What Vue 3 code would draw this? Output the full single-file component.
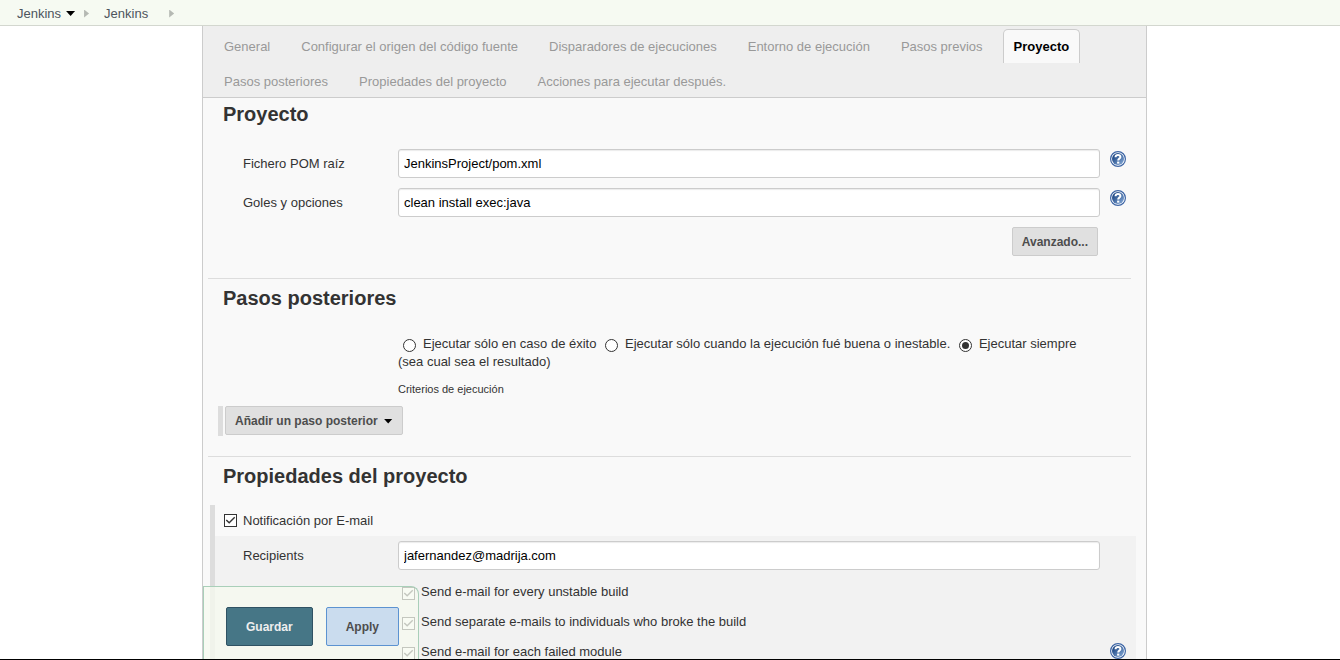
<script setup>
import { ref } from 'vue'

const tabs = [
  'General',
  'Configurar el origen del código fuente',
  'Disparadores de ejecuciones',
  'Entorno de ejecución',
  'Pasos previos',
  'Proyecto',
  'Pasos posteriores',
  'Propiedades del proyecto',
  'Acciones para ejecutar después.',
]
const active = ref('Proyecto')

const fields = ref([
  { id: 'pom', label: 'Fichero POM raíz', value: 'JenkinsProject/pom.xml' },
  { id: 'goals', label: 'Goles y opciones', value: 'clean install exec:java' },
])

const runModes = [
  { id: 'success', label: 'Ejecutar sólo en caso de éxito' },
  { id: 'unstable', label: 'Ejecutar sólo cuando la ejecución fué buena o inestable.' },
  { id: 'always', label: 'Ejecutar siempre (sea cual sea el resultado)' },
]
const runMode = ref('always')

const notify = ref(true)
const recipients = ref('jafernandez@madrija.com')
const mailOptions = ref([
  { id: 'every', label: 'Send e-mail for every unstable build', on: true },
  { id: 'separate', label: 'Send separate e-mails to individuals who broke the build', on: true },
  { id: 'module', label: 'Send e-mail for each failed module', on: true, help: true },
])
</script>

<template>
  <div class="page">
    <svg class="defs" width="0" height="0" aria-hidden="true">
      <defs>
        <linearGradient id="help-fill" x1="0" y1="0" x2="1" y2="1">
          <stop offset="0.2" stop-color="#204a87" />
          <stop offset="1" stop-color="#8db0dc" />
        </linearGradient>
        <symbol id="help-icon" viewBox="0 0 16 16">
          <circle cx="8" cy="8" r="7.4" fill="#fff" stroke="#3d65a5" stroke-width="1.2" />
          <circle cx="8" cy="8" r="6" fill="url(#help-fill)" />
          <path d="M5.5 6.2C5.6 4.6 6.6 4 8 4C9.6 4 10.4 4.8 10.4 5.9C10.4 7.5 8.2 7.7 8.2 9.6" fill="none" stroke="#fff" stroke-width="2" />
          <rect x="7.1" y="10.6" width="2.2" height="2" fill="#fff" />
        </symbol>
      </defs>
    </svg>

    <nav class="crumbs">
      <a href="#">Jenkins</a>
      <span class="caret"></span>
      <span class="arrow"></span>
      <a class="second" href="#">Jenkins</a>
      <span class="arrow last"></span>
    </nav>

    <main class="panel">
      <div class="tabbar">
        <div class="tabs">
          <button
            v-for="tab in tabs"
            :key="tab"
            type="button"
            class="tab"
            :class="{ active: tab === active }"
            @click="active = tab"
          >{{ tab }}</button>
        </div>
      </div>

      <section class="first">
        <h2>Proyecto</h2>
        <div v-for="f in fields" :key="f.id" class="row">
          <label :for="f.id">{{ f.label }}</label>
          <input :id="f.id" v-model="f.value" type="text" class="text" />
          <a class="help" href="#" aria-label="Ayuda"><svg width="16" height="16"><use href="#help-icon" /></svg></a>
        </div>
        <div class="advanced">
          <button type="button" class="btn">Avanzado...</button>
        </div>
      </section>
      <hr />

      <section>
        <h2>Pasos posteriores</h2>
        <div class="modes">
          <template v-for="m in runModes" :key="m.id">
            <input :id="m.id" v-model="runMode" type="radio" name="mode" :value="m.id" />
            <label :for="m.id">{{ m.label }}</label>{{ ' ' }}
          </template>
          <p>Criterios de ejecución</p>
        </div>
        <div class="steps">
          <button type="button" class="btn">Añadir un paso posterior<span class="caret"></span></button>
        </div>
      </section>
      <hr />

      <section>
        <h2>Propiedades del proyecto</h2>
        <div class="group">
          <div class="notify">
            <input id="notify" v-model="notify" type="checkbox" />
            <label for="notify">Notificación por E-mail</label>
          </div>
          <div class="nested">
            <div class="row">
              <label for="recipients">Recipients</label>
              <input id="recipients" v-model="recipients" type="text" class="text" />
            </div>
            <div v-for="o in mailOptions" :key="o.id" class="row option">
              <div class="choice">
                <input :id="o.id" v-model="o.on" type="checkbox" />
                <label :for="o.id">{{ o.label }}</label>
              </div>
              <a v-if="o.help" class="help" href="#" aria-label="Ayuda"><svg width="16" height="16"><use href="#help-icon" /></svg></a>
            </div>
          </div>
        </div>
      </section>

      <div class="actions">
        <button type="button" class="save">Guardar</button>
        <button type="button" class="apply">Apply</button>
      </div>
    </main>
  </div>
</template>

<style>
body {
  margin: 0;
  background: #fff;
}
</style>

<style scoped>
* {
  box-sizing: border-box;
}
.page {
  display: flex;
  flex-direction: column;
  height: 100vh;
  overflow: hidden;
  border-bottom: 1px solid #000;
  font-family: "Liberation Sans", Arial, sans-serif;
  font-size: 13px;
  line-height: 18px;
  color: #333;
}
.defs {
  position: absolute;
}
button,
input {
  margin: 0;
  font-family: inherit;
}
.crumbs {
  display: flex;
  flex: none;
  align-items: center;
  height: 26px;
  padding: 2px 17px 0;
  background: #f6faf2;
  border-bottom: 1px solid #d3d7cf;
}
.crumbs a {
  color: #4d545d;
  text-decoration: none;
}
.caret {
  display: inline-block;
  width: 9px;
  height: 5px;
  background: #000;
  clip-path: polygon(0 0, 100% 0, 50% 100%);
}
.crumbs .caret {
  margin-left: 5px;
}
.arrow {
  width: 5px;
  height: 8px;
  margin-left: 9px;
  background: #b5b9b3;
  clip-path: polygon(0 0, 100% 50%, 0 100%);
}
.crumbs .second {
  margin-left: 15px;
}
.arrow.last {
  margin-left: 21px;
}
.panel {
  position: relative;
  flex: 1;
  min-height: 0;
  margin: 0 193px 0 202px;
  overflow: hidden;
  background: #f9f9f9;
  border: solid #ccc;
  border-width: 0 1px;
}
.tabbar {
  padding: 3px 10px 0;
  background: #eee;
  border-bottom: 1px solid #ccc;
}
.tabs {
  display: flex;
  flex-wrap: wrap;
  gap: 1px 9px;
  margin-bottom: -1px;
}
.tab {
  height: 34px;
  padding: 0 10px;
  font-size: 13px;
  color: #999;
  background: none;
  border: 1px solid transparent;
  border-bottom: 0;
}
.tab.active {
  font-weight: bold;
  color: #000;
  background: #f9f9f9;
  border-color: #ccc;
  border-radius: 5px 5px 0 0;
}
section {
  padding-top: 7px;
}
section.first {
  padding-top: 4px;
}
h2 {
  margin: 0 0 23px 20px;
  font-size: 20px;
  line-height: 24px;
}
.row {
  display: grid;
  grid-template-columns: 155px 1fr 46px;
  align-items: center;
  margin-bottom: 10px;
  padding-left: 40px;
}
.text {
  width: 100%;
  height: 29px;
  padding: 0 5px;
  font-size: 13px;
  color: #000;
  background: #fff;
  border: 1px solid #ccc;
  border-radius: 3px;
  box-shadow: inset 0 1px 1px rgba(0, 0, 0, 0.08);
}
.help {
  align-self: start;
  height: 16px;
  margin: 2px 0 0 10px;
}
.help svg {
  display: block;
}
.advanced {
  display: flex;
  justify-content: flex-end;
  padding: 0 48px 22px 0;
}
.btn {
  height: 29px;
  padding: 0 9px;
  font-size: 12px;
  font-weight: bold;
  color: #4d4d4d;
  background: #e0e0e0;
  border: 1px solid #ccc;
  border-radius: 2px;
}
.btn .caret {
  margin: 0 0 1px 6px;
}
hr {
  height: 1px;
  margin: 0 15px 0 5px;
  background: #ddd;
  border: 0;
}
.modes {
  margin: 0 46px 0 195px;
  padding-top: 2px;
}
input[type="radio"],
input[type="checkbox"] {
  position: relative;
  flex: none;
  width: 13px;
  height: 13px;
  appearance: none;
  background: #fff;
  border: 1px solid #333;
}
input[type="radio"] {
  margin: 0 3px 0 5px;
  vertical-align: -4px;
  border-radius: 50%;
}
.modes label {
  margin-left: 4px;
}
input[type="radio"]:checked::after {
  position: absolute;
  inset: 2px;
  content: "";
  background: #333;
  border-radius: 50%;
}
input[type="checkbox"]:checked::after {
  position: absolute;
  inset: 0;
  content: "";
  background: #333;
  clip-path: polygon(7% 50%, 16% 41%, 38% 62%, 84% 16%, 93% 25%, 38% 80%);
}
.modes p {
  margin: 10px 0 9px;
  font-size: 11px;
  line-height: 16px;
}
.steps {
  height: 30px;
  margin: 0 0 20px 15px;
  padding-left: 2px;
  border-left: 5px solid #ddd;
}
.group {
  margin: -6px 10px 0 7px;
  border-left: 5px solid #ddd;
}
.notify {
  display: flex;
  gap: 6px;
  align-items: center;
  height: 31px;
  padding-left: 9px;
}
.nested {
  padding-top: 5px;
  background: #f2f2f2;
}
.nested .row {
  grid-template-columns: 155px 1fr 36px;
  margin-bottom: 13px;
  padding-left: 28px;
}
.nested .option {
  margin-bottom: 12px;
}
.choice {
  display: flex;
  grid-column: 2;
  gap: 6px;
  align-items: center;
  padding-left: 4px;
}
.choice input {
  margin-top: 3px;
}
.nested .help {
  margin-top: 0;
}
.actions {
  position: absolute;
  bottom: 0;
  left: 0;
  display: flex;
  gap: 13px;
  padding: 20px 19px 13px 22px;
  background: rgba(245, 249, 239, 0.75);
  border: solid #a9cfb9;
  border-width: 1px 1px 0;
  border-radius: 0 8px 0 0;
}
.actions button {
  height: 39px;
  padding: 0 19px;
  font-size: 12px;
  font-weight: bold;
  border-radius: 2px;
}
.save {
  color: #eee;
  background: #467686;
  border: 1px solid #2f5263;
}
.apply {
  color: #4d4d4d;
  background: #cadcee;
  border: 1px solid #5c93d1;
}
</style>
